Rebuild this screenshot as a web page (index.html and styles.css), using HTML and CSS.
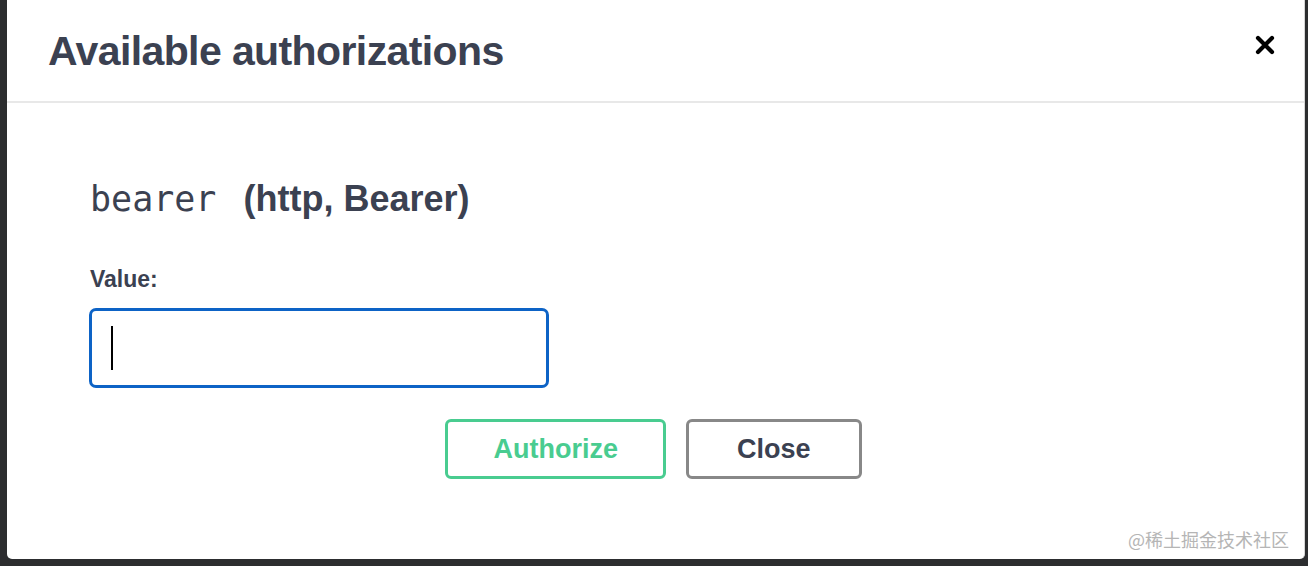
FILE: index.html
```html
<!DOCTYPE html>
<html>
	<head>
		<meta charset="UTF-8">
		<title>Available authorizations</title>
		<link rel="stylesheet" href="styles.css">
	</head>
	<body>
		<div class="modal">
			<div class="modal-header">
				<h3 class="modal-title">Available authorizations</h3>
				<button class="close-modal" type="button">
					<svg width="20" height="20" viewBox="0 0 20 20">
						<path d="M3 3 L17 17 M17 3 L3 17" stroke="#000" stroke-width="4.2" stroke-linecap="round" fill="none"/>
					</svg>
				</button>
			</div>
			<div class="modal-body">
				<h4 class="auth-name"><code>bearer</code> (http, Bearer)</h4>
				<label class="field-label">Value:</label>
				<div class="field-input">
					<span class="caret"></span>
				</div>
				<div class="auth-btn-wrapper">
					<button class="btn authorize" type="button">Authorize</button>
					<button class="btn btn-done" type="button">Close</button>
				</div>
			</div>
			<div class="watermark">@稀土掘金技术社区</div>
		</div>
	</body>
</html>
```

FILE: styles.css
```css
* {
	margin: 0;
	padding: 0;
	box-sizing: border-box;
}

body {
	background-color: #2c2d2f;
	padding: 0 3px 7px 7px;
	font-family: "Liberation Sans", Arial, "Noto Sans CJK SC", sans-serif;
	color: #3b4151;
}

.modal {
	position: relative;
	background: #fff;
	height: 559px;
	border-radius: 0 0 5px 5px;
	border-right: 1px solid #d6d6d6;
}

.modal-header {
	display: flex;
	justify-content: space-between;
	align-items: center;
	height: 103px;
	padding: 0 29px 0 41px;
	border-bottom: 2px solid #e8e8e8;
}

.modal-title {
	font-size: 41px;
	line-height: 48px;
	font-weight: bold;
	letter-spacing: -0.6px;
}

.close-modal {
	display: flex;
	border: none;
	background: none;
	margin-bottom: 12px;
}

.modal-body {
	padding: 74px 82px 0 82px;
}

.auth-name {
	font-size: 36px;
	line-height: 44px;
	font-weight: bold;
	padding-left: 1px;
}

.auth-name code {
	font-family: "DejaVu Sans Mono", "Liberation Mono", monospace;
	font-size: 35px;
	font-weight: normal;
	margin-right: 17px;
}

.field-label {
	display: block;
	margin-top: 44px;
	font-size: 23px;
	line-height: 28px;
	font-weight: bold;
	padding-left: 1px;
}

.field-input {
	display: flex;
	width: 460px;
	height: 80px;
	margin-top: 15px;
	padding: 15px 0 15px 19px;
	border: 3px solid #0d63c6;
	border-radius: 7px;
}

.caret {
	width: 2px;
	height: 44px;
	background: #000;
}

.auth-btn-wrapper {
	display: flex;
	justify-content: center;
	gap: 20px;
	margin-top: 31px;
	padding-right: 4px;
}

.btn {
	height: 60px;
	font-family: "Liberation Sans", Arial, sans-serif;
	font-size: 27px;
	font-weight: bold;
	background: #fff;
	border: 3px solid #888;
	border-radius: 6px;
	color: #3b4151;
	padding: 0 48px;
}

.btn.authorize {
	color: #49cc90;
	border-color: #49cc90;
	padding: 0 45px;
}

.watermark {
	position: absolute;
	right: 15px;
	bottom: 9px;
	font-family: "Noto Sans CJK SC", sans-serif;
	font-size: 18px;
	line-height: 22px;
	color: #b5b5b5;
}
```
